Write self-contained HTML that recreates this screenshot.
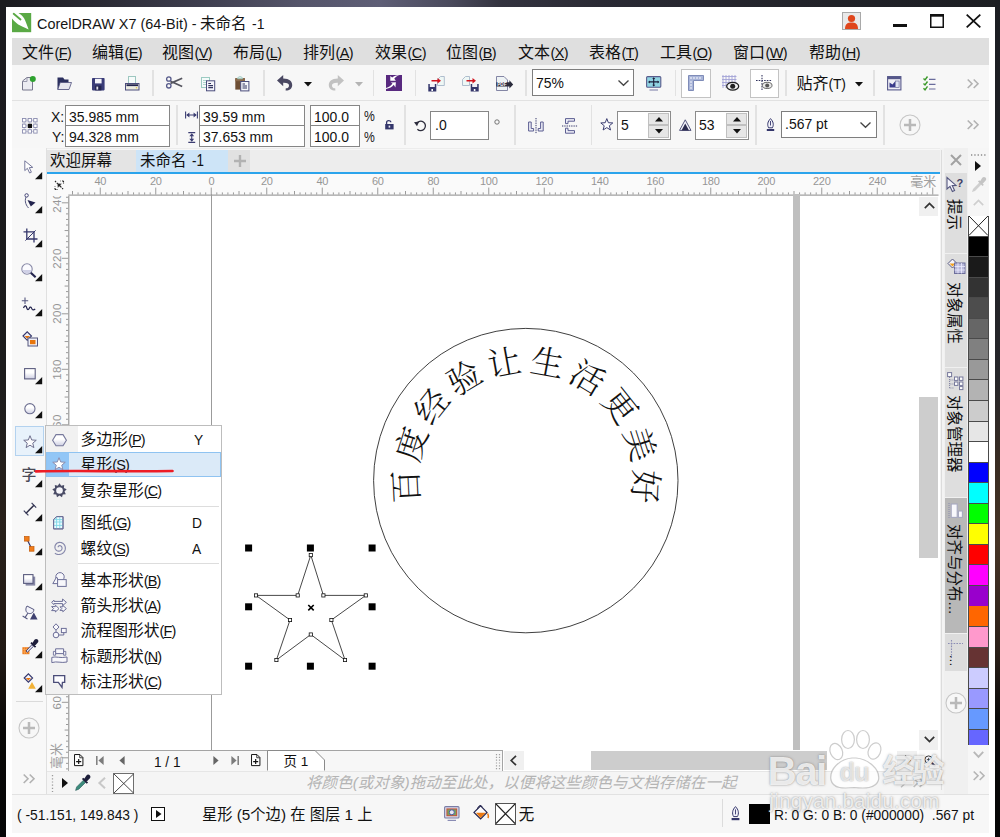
<!DOCTYPE html><html lang="zh"><head><meta charset="utf-8"><title>CorelDRAW X7 (64-Bit) - 未命名 -1</title><style>
html,body{margin:0;padding:0;}
body{width:1000px;height:837px;overflow:hidden;position:relative;background:#1d1d20;font-family:"Liberation Sans","Noto Sans CJK SC",sans-serif;color:#1a1a1a;}
.a{position:absolute;}
.t{position:absolute;white-space:nowrap;line-height:1;}
.u{text-decoration:underline;text-underline-offset:1px;text-decoration-thickness:1px;}
.fld{position:absolute;background:#fff;border:1px solid #868686;box-sizing:border-box;}
.sep{position:absolute;width:1px;background:#d4d4d4;}
svg{position:absolute;overflow:visible;}
</style></head><body>
<div class="a" style="left:0px;top:0px;width:1000px;height:8px;background:linear-gradient(90deg,#1a1a1e 0%,#2a2a34 10%,#3e3e4e 20%,#55556a 30%,#5e5e76 38%,#4a4a5c 45%,#33333f 50%,#2a2a34 60%,#22232a 80%,#1c1e22 100%);"></div>
<div class="a" style="left:0px;top:0px;width:6px;height:837px;background:linear-gradient(180deg,#1b1b1f 0%,#1d1c1d 45%,#2a221c 62%,#221a15 78%,#0a0908 87%,#050505 100%);"></div>
<div class="a" style="left:995px;top:0px;width:5px;height:837px;background:linear-gradient(180deg,#1b1d22 0%,#26262a 45%,#3a2c22 56%,#463426 65%,#2a1f18 78%,#0a0908 86%,#060606 100%);"></div>
<div class="a" style="left:6px;top:7px;width:989.2px;height:830px;background:#ffffff;"></div>
<svg style="left:11.9px;top:12.7px" width="19.2" height="19.2" viewBox="0 0 19.2 19.2"><rect x="0" y="0" width="19.2" height="19.2" fill="#5aa945"/><path d="M0 0 H6.5 C9 1.5 11 3.5 12.2 5.4 C13.5 8 15.5 13 16.6 16.4 C12.5 14.5 8.5 12.8 6.2 11.4 C3.8 9.8 1.5 7.5 0 5.6 Z" fill="#fff"/><path d="M1.7 0.8 L8.5 6.4" stroke="#5aa945" stroke-width="1.9" stroke-linecap="round"/></svg>
<div class="t" style="left:37.3px;top:15.5px;font-size:15.5px;color:#151515;transform-origin:0 0;transform:scaleX(0.929);">CorelDRAW X7 (64-Bit) -</div>
<div class="t" style="left:200px;top:15.6px;font-size:15.5px;color:#151515;">未命名</div>
<div class="t" style="left:252px;top:15.5px;font-size:15.5px;color:#151515;transform-origin:0 0;transform:scaleX(0.900);">-1</div>
<div class="a" style="left:12px;top:37.5px;width:977px;height:27.5px;background:#dfdfdf;"></div>
<div class="t" style="left:22px;top:44.5px;font-size:16px;color:#111;">文件<span style="font-size:14.5px;letter-spacing:-0.6px;margin-left:0.5px">(<span class="u">F</span>)</span></div>
<div class="t" style="left:92px;top:44.5px;font-size:16px;color:#111;">编辑<span style="font-size:14.5px;letter-spacing:-0.6px;margin-left:0.5px">(<span class="u">E</span>)</span></div>
<div class="t" style="left:162px;top:44.5px;font-size:16px;color:#111;">视图<span style="font-size:14.5px;letter-spacing:-0.6px;margin-left:0.5px">(<span class="u">V</span>)</span></div>
<div class="t" style="left:233px;top:44.5px;font-size:16px;color:#111;">布局<span style="font-size:14.5px;letter-spacing:-0.6px;margin-left:0.5px">(<span class="u">L</span>)</span></div>
<div class="t" style="left:303px;top:44.5px;font-size:16px;color:#111;">排列<span style="font-size:14.5px;letter-spacing:-0.6px;margin-left:0.5px">(<span class="u">A</span>)</span></div>
<div class="t" style="left:375px;top:44.5px;font-size:16px;color:#111;">效果<span style="font-size:14.5px;letter-spacing:-0.6px;margin-left:0.5px">(<span class="u">C</span>)</span></div>
<div class="t" style="left:446px;top:44.5px;font-size:16px;color:#111;">位图<span style="font-size:14.5px;letter-spacing:-0.6px;margin-left:0.5px">(<span class="u">B</span>)</span></div>
<div class="t" style="left:518px;top:44.5px;font-size:16px;color:#111;">文本<span style="font-size:14.5px;letter-spacing:-0.6px;margin-left:0.5px">(<span class="u">X</span>)</span></div>
<div class="t" style="left:589px;top:44.5px;font-size:16px;color:#111;">表格<span style="font-size:14.5px;letter-spacing:-0.6px;margin-left:0.5px">(<span class="u">T</span>)</span></div>
<div class="t" style="left:660px;top:44.5px;font-size:16px;color:#111;">工具<span style="font-size:14.5px;letter-spacing:-0.6px;margin-left:0.5px">(<span class="u">O</span>)</span></div>
<div class="t" style="left:733px;top:44.5px;font-size:16px;color:#111;">窗口<span style="font-size:14.5px;letter-spacing:-0.6px;margin-left:0.5px">(<span class="u">W</span>)</span></div>
<div class="t" style="left:809px;top:44.5px;font-size:16px;color:#111;">帮助<span style="font-size:14.5px;letter-spacing:-0.6px;margin-left:0.5px">(<span class="u">H</span>)</span></div>
<div class="a" style="left:12px;top:65px;width:977px;height:35px;background:#f7f7f7;"></div>
<div class="a" style="left:12px;top:100px;width:977px;height:1px;background:#e2e2e2;"></div>
<div class="a" style="left:12px;top:101px;width:977px;height:48.5px;background:#f7f7f7;"></div>
<div class="a" style="left:12px;top:148px;width:977px;height:1px;background:#ececec;"></div>
<div class="a" style="left:47px;top:149.5px;width:893px;height:22.7px;background:#ededed;"></div>
<div class="a" style="left:47px;top:149.5px;width:89px;height:22.7px;background:#e4e4e4;"></div>
<div class="a" style="left:136px;top:149.5px;width:92px;height:22.7px;background:#cde4f7;"></div>
<div class="a" style="left:228px;top:149.5px;width:22px;height:22.7px;background:#e1e1e1;"></div>
<div class="t" style="left:50px;top:153px;font-size:15.5px;color:#111;">欢迎屏幕</div>
<div class="t" style="left:140px;top:153px;font-size:15.5px;color:#111;">未命名</div>
<div class="t" style="left:191.5px;top:152.8px;font-size:15.6px;color:#111;transform-origin:0 0;transform:scaleX(0.860);">-1</div>
<div class="a" style="left:47px;top:172px;width:893px;height:1.5px;background:#2ba4ec;"></div>
<div class="a" style="left:12px;top:148px;width:34px;height:646.5px;background:#f8f8f8;"></div>
<div class="a" style="left:46px;top:148px;width:1px;height:646px;background:#e0e0e0;"></div>
<div class="a" style="left:47px;top:174px;width:893px;height:22px;background:#fafafa;"></div>
<div class="a" style="left:47px;top:194px;width:22.5px;height:577px;background:#fafafa;"></div>
<div class="a" style="left:69.5px;top:195.7px;width:849.5px;height:554.3px;background:#ffffff;"></div>
<svg style="left:842px;top:12px" width="19" height="18" viewBox="0 0 19 18"><rect x="0.5" y="0.5" width="18" height="17" fill="#e9e9e9" stroke="#a9a9a9"/><circle cx="9.5" cy="6.5" r="3.6" fill="#e0461c"/><path d="M3 17 C3 11.5 6 10.5 9.5 10.5 C13 10.5 16 11.5 16 17 Z" fill="#e0461c"/></svg>
<div class="a" style="left:892.5px;top:24px;width:14px;height:3px;background:#111;"></div>
<svg style="left:930px;top:14px" width="14" height="14" viewBox="0 0 14 14"><rect x="0.75" y="1.5" width="12.5" height="11.75" fill="none" stroke="#111" stroke-width="1.5"/><rect x="0" y="0" width="14" height="2.6" fill="#111"/></svg>
<svg style="left:966px;top:14px" width="15" height="14" viewBox="0 0 15 14"><path d="M0.7 0.7 L14.3 13.3 M14.3 0.7 L0.7 13.3" stroke="#111" stroke-width="1.8" fill="none"/></svg>
<svg style="left:22px;top:75px" width="14" height="16" viewBox="0 0 14 16"><path d="M0.5 15 V6 L5 2.5 H10.5 V15 Z" fill="#ececf2" stroke="#77778c"/><path d="M0.5 6.5 H5 V2.5" fill="none" stroke="#9a9aae"/><circle cx="10.8" cy="4" r="3" fill="#2fa22f"/></svg>
<svg style="left:56.5px;top:77px" width="15" height="13" viewBox="0 0 15 13"><path d="M0.5 12.5 V0.5 H6 L7.5 2.5 H11.5 V12.5 Z" fill="#2b2f5e"/><path d="M0.8 12.5 L3.2 5.5 H14.5 L12 12.5 Z" fill="#e6e6ef" stroke="#50527e" stroke-width="0.8"/></svg>
<svg style="left:91.5px;top:78px" width="13" height="12.5" viewBox="0 0 13 12.5"><rect x="0" y="0" width="12.6" height="12.4" rx="0.8" fill="#3a3c78"/><rect x="3" y="0.8" width="6.6" height="4.6" fill="#f4f4fa"/><rect x="3.2" y="7.6" width="6.2" height="4.8" fill="#23244e"/><rect x="4.4" y="8.6" width="1.8" height="3" fill="#e0e0ea"/></svg>
<svg style="left:125px;top:76px" width="14.5" height="14.5" viewBox="0 0 14.5 14.5"><rect x="3.5" y="0.5" width="7" height="8" fill="#f6fbfa" stroke="#9dc7c0"/><rect x="0.5" y="7.5" width="13.5" height="6.5" fill="#ecece2" stroke="#4c4e7c"/><rect x="1.5" y="8.3" width="11.5" height="1.8" fill="#23244e"/><rect x="10.8" y="11.3" width="1.4" height="1" fill="#e8c020"/></svg>
<div class="a" style="left:152px;top:70px;width:1.5px;height:26px;background:#e2e2e2;"></div>
<svg style="left:165.5px;top:76px" width="17" height="13" viewBox="0 0 17 13"><path d="M4.5 5.2 L16.2 10.6 M4.5 7.4 L16.2 2.2" stroke="#55555f" stroke-width="1.7" fill="none"/><circle cx="2.8" cy="3" r="2.2" fill="none" stroke="#565a8a" stroke-width="1.3"/><circle cx="2.8" cy="9.8" r="2.2" fill="none" stroke="#565a8a" stroke-width="1.3"/></svg>
<svg style="left:201px;top:77px" width="14.5" height="14.5" viewBox="0 0 14.5 14.5"><rect x="0.5" y="0.5" width="8" height="10" fill="#f4fbfa" stroke="#9ccbc2"/><path d="M2 3.5 H6 M2 5.5 H6 M2 7.5 H6" stroke="#9ccbc2" stroke-width="0.8"/><rect x="5.5" y="3.8" width="8.2" height="10" fill="#f5f5fa" stroke="#4c4e7c"/><path d="M7.3 6.5 H10 M7.3 8.6 H12 M7.3 10.6 H12" stroke="#33355f" stroke-width="1.1"/></svg>
<svg style="left:235px;top:76px" width="14.5" height="15.5" viewBox="0 0 14.5 15.5"><rect x="0.3" y="2.2" width="9.6" height="11.4" fill="#6e4f35"/><rect x="0.3" y="2.2" width="9.6" height="3" fill="#8a6a4c"/><path d="M2.5 2.8 C2.5 0 7.6 0 7.6 2.8 Z" fill="#dff2ee" stroke="#8fbfb6" stroke-width="0.8"/><rect x="5.7" y="5.5" width="8.2" height="9.4" fill="#f5f5fa" stroke="#4c4e7c"/><path d="M7.5 8 H10 M7.5 10 H12 M7.5 12 H12" stroke="#33355f" stroke-width="1.1"/></svg>
<div class="a" style="left:263px;top:70px;width:1.5px;height:26px;background:#e2e2e2;"></div>
<svg style="left:277px;top:75px" width="16" height="16" viewBox="0 0 16 16"><g><path d="M0 5.6 L6.2 0 V3.4 C12.5 3.4 15.4 6.4 15.2 10.4 C15 13.6 12.2 15.8 8.6 15.6 L8.8 13.3 C11 13.3 12 12 12 10.4 C12 8.6 10.4 7.6 6.2 7.7 V11.2 Z" fill="#4a4862"/></g></svg>
<svg style="left:303.5px;top:82px" width="8" height="4.5" viewBox="0 0 8 4.5"><path d="M0 0 H8 L4 4.5 Z" fill="#111"/></svg>
<svg style="left:327.5px;top:75px" width="16" height="16" viewBox="0 0 16 16"><g transform="translate(16,0) scale(-1,1)"><path d="M0 5.6 L6.2 0 V3.4 C12.5 3.4 15.4 6.4 15.2 10.4 C15 13.6 12.2 15.8 8.6 15.6 L8.8 13.3 C11 13.3 12 12 12 10.4 C12 8.6 10.4 7.6 6.2 7.7 V11.2 Z" fill="#c2c2c2"/></g></svg>
<svg style="left:354.5px;top:82px" width="8" height="4.5" viewBox="0 0 8 4.5"><path d="M0 0 H8 L4 4.5 Z" fill="#b4b4b4"/></svg>
<div class="a" style="left:372.5px;top:70px;width:1.5px;height:26px;background:#e2e2e2;"></div>
<svg style="left:386px;top:75px" width="16" height="16" viewBox="0 0 16 16"><rect width="16" height="16" fill="#58297f"/><path d="M13.6 0 C10.6 0.9 9.2 2.4 8.3 3.8 L9.9 5.8 H4.3 V0.9 L6.2 2.6 C8 1 10.4 0.1 13.6 0 Z" fill="#fff"/><path d="M0 14 C3.6 13.4 6.2 11.8 7.8 9.8 L9.4 12.6 L9.9 7.2 L4.8 7.5 L6.5 8.6 C5 10.6 3 12.2 0 13 Z" fill="#fff"/></svg>
<div class="a" style="left:414.5px;top:70px;width:1.5px;height:26px;background:#e2e2e2;"></div>
<svg style="left:427.5px;top:76px" width="17" height="15.5" viewBox="0 0 17 15.5"><path d="M9.5 3.5 L12.5 0.5 H16.3 V9.5 H9.5 Z" fill="#eef7f5" stroke="#a7b7c9" stroke-width="0.9"/><rect x="0.3" y="8" width="8" height="7.5" fill="#34366b"/><rect x="1.8" y="8" width="5" height="3" fill="#f0f0f6"/><rect x="3.4" y="13" width="1.6" height="2" fill="#fff"/><path d="M3.5 4 H9.5 V2 L13 4.8 L9.5 7.6 V5.6 H3.5 Z" fill="#d2141e"/></svg>
<svg style="left:461.5px;top:76px" width="17" height="15.5" viewBox="0 0 17 15.5"><path d="M0.5 3.5 L3.5 0.5 H7.5 V9.5 H0.5 Z" fill="#eef7f5" stroke="#a7b7c9" stroke-width="0.9"/><rect x="8.7" y="8" width="8" height="7.5" fill="#34366b"/><rect x="10.2" y="8" width="5" height="3" fill="#f0f0f6"/><rect x="11.8" y="13" width="1.6" height="2" fill="#fff"/><path d="M4.5 4 H10.5 V2 L14 4.8 L10.5 7.6 V5.6 H4.5 Z" fill="#d2141e"/></svg>
<svg style="left:496px;top:76px" width="17.5" height="15.5" viewBox="0 0 17.5 15.5"><path d="M0.5 0.5 H8 L11.5 4 V14.5 H0.5 Z" fill="#eef3f5" stroke="#77799c" stroke-width="0.9"/><path d="M0.3 6.2 H13.4 V4.3 L17.2 8.4 L13.4 12.4 V10.6 H0.3 Z" fill="#2a2b3c"/><text x="1.3" y="10.1" font-size="4.6" font-weight="700" fill="#fff" font-family="Liberation Sans,sans-serif">PDF</text></svg>
<div class="a" style="left:525px;top:70px;width:1.5px;height:26px;background:#e2e2e2;"></div>
<div class="fld" style="left:532px;top:68.5px;width:102px;height:27px;border-color:#7e7e7e"></div>
<div class="t" style="left:535.5px;top:75.1px;font-size:15px;color:#111;transform-origin:0 0;transform:scaleX(0.930);">75%</div>
<svg style="left:617.5px;top:79.5px" width="11" height="6" viewBox="0 0 11 6"><path d="M0.5 0.5 L5.5 5.3 L10.5 0.5" fill="none" stroke="#444" stroke-width="1.3"/></svg>
<svg style="left:645.5px;top:76px" width="15.5" height="15" viewBox="0 0 15.5 15"><rect x="0.6" y="0.6" width="14.2" height="10.6" rx="1" fill="#8fd3e2" stroke="#5a5c8c" stroke-width="1.1"/><path d="M7.7 2 V9.8 M3 5.9 H12.4" stroke="#1d1e3a" stroke-width="1.1"/><path d="M7.7 1.2 L9.2 3 H6.2 Z M7.7 10.6 L9.2 8.8 H6.2 Z M2 5.9 L3.8 4.4 V7.4 Z M13.4 5.9 L11.6 4.4 V7.4 Z" fill="#1d1e3a"/><path d="M3.5 14 H12" stroke="#8b8db2" stroke-width="1.2"/></svg>
<div class="a" style="left:674.5px;top:70px;width:1.5px;height:26px;background:#e2e2e2;"></div>
<div class="a" style="left:681px;top:68.5px;width:29.5px;height:29px;box-sizing:border-box;background:#fff;border:1px solid #c3c3c3"></div>
<svg style="left:688px;top:75px" width="16" height="16" viewBox="0 0 16 16"><path d="M0.5 0.5 H15.5 V5.5 H5.5 V15.5 H0.5 Z" fill="#a8b4d8" stroke="#7f8cb8"/><path d="M3 2 V4 M6 2 V4 M9 2 V4 M12 2 V4 M2 7 H4 M2 10 H4 M2 13 H4" stroke="#f4f6fc" stroke-width="1.1"/></svg>
<svg style="left:722px;top:75px" width="17" height="16" viewBox="0 0 17 16"><path d="M1 0 V13 M4 0 V13 M7 0 V13 M10 0 V13 M13 0 V13 M0 1.5 H14.5 M0 4.5 H14.5 M0 7.5 H14.5 M0 10.5 H14.5" stroke="#a3a3d6" stroke-width="0.9"/><ellipse cx="10.7" cy="11.2" rx="6" ry="3.9" fill="#f2f2f2" stroke="#222" stroke-width="1.3"/><circle cx="10.7" cy="11.2" r="2.5" fill="#222"/></svg>
<div class="a" style="left:750px;top:68.5px;width:29px;height:29px;box-sizing:border-box;background:#fff;border:1px solid #c3c3c3"></div>
<svg style="left:756px;top:75px" width="17" height="16" viewBox="0 0 17 16"><path d="M6 0 V16 M0 5.5 H16" stroke="#33355f" stroke-width="1.1" stroke-dasharray="1.6 1.1"/><ellipse cx="11.2" cy="10.4" rx="4.8" ry="3.1" fill="#e8e8e8" stroke="#666" stroke-width="1"/><circle cx="11.2" cy="10.4" r="2" fill="#555"/></svg>
<div class="a" style="left:785px;top:70px;width:1.5px;height:26px;background:#e2e2e2;"></div>
<div class="t" style="left:796.5px;top:75.5px;font-size:16px;color:#111;">贴齐<span style="font-size:14px;letter-spacing:-0.3px">(T)</span></div>
<svg style="left:855px;top:82px" width="8" height="4.5" viewBox="0 0 8 4.5"><path d="M0 0 H8 L4 4.5 Z" fill="#111"/></svg>
<div class="a" style="left:873px;top:70px;width:1.5px;height:26px;background:#e2e2e2;"></div>
<svg style="left:887px;top:76px" width="14.5" height="14.5" viewBox="0 0 14.5 14.5"><rect x="0.6" y="0.6" width="13.3" height="13.3" fill="#f0f0f6" stroke="#56588a" stroke-width="1.1"/><rect x="0.6" y="0.6" width="13.3" height="2.6" fill="#56588a"/><path d="M2.5 11.5 V6.5 L5.5 8.5 L8 5.5 V11.5 Z" fill="#3a3c8c"/><rect x="8.5" y="5" width="3.6" height="6.5" fill="#dfe3f2" stroke="#6a6c9c" stroke-width="0.7"/></svg>
<svg style="left:922.5px;top:76px" width="13" height="14.5" viewBox="0 0 13 14.5"><path d="M0.5 2.5 L2 4 L4.5 0.5 M0.5 7.5 L2 9 L4.5 5.5 M0.5 12.3 L2 13.8 L4.5 10.3" fill="none" stroke="#3c9a2a" stroke-width="1.4"/><path d="M6 3.3 H12.5 M6 8.3 H12.5 M6 13 H12.5" stroke="#6a6c9c" stroke-width="1.2"/></svg>
<svg style="left:967px;top:78.5px" width="12" height="9.5" viewBox="0 0 12 9.5"><path d="M0.7 0.5 L5 4.75 L0.7 9 M6.7 0.5 L11 4.75 L6.7 9" fill="none" stroke="#b2b2b2" stroke-width="1.6"/></svg>
<svg style="left:21.5px;top:117.5px" width="16" height="16" viewBox="0 0 16 16"><path d="M2.2 2.2 H13.4 V13.4 H2.2 Z M2.2 7.8 H13.4 M7.8 2.2 V13.4" stroke="#b9bad0" stroke-width="0.8" fill="none"/><rect x="0.5" y="0.5" width="3.4" height="3.4" fill="#fff" stroke="#8b8db0" stroke-width="0.9"/><rect x="6.1" y="0.5" width="3.4" height="3.4" fill="#fff" stroke="#8b8db0" stroke-width="0.9"/><rect x="11.7" y="0.5" width="3.4" height="3.4" fill="#fff" stroke="#8b8db0" stroke-width="0.9"/><rect x="0.5" y="6.1" width="3.4" height="3.4" fill="#fff" stroke="#8b8db0" stroke-width="0.9"/><rect x="5.8" y="5.8" width="4.2" height="4.2" fill="#111"/><rect x="11.7" y="6.1" width="3.4" height="3.4" fill="#fff" stroke="#8b8db0" stroke-width="0.9"/><rect x="0.5" y="11.7" width="3.4" height="3.4" fill="#fff" stroke="#8b8db0" stroke-width="0.9"/><rect x="6.1" y="11.7" width="3.4" height="3.4" fill="#fff" stroke="#8b8db0" stroke-width="0.9"/><rect x="11.7" y="11.7" width="3.4" height="3.4" fill="#fff" stroke="#8b8db0" stroke-width="0.9"/></svg>
<div class="t" style="left:50.5px;top:108.6px;font-size:15px;color:#111;transform-origin:0 0;transform:scaleX(0.930);">X:</div>
<div class="t" style="left:51.5px;top:129.1px;font-size:15px;color:#111;transform-origin:0 0;transform:scaleX(0.930);">Y:</div>
<div class="fld" style="left:65px;top:105px;width:105px;height:21px"><div class="t" style="left:2.6px;top:2.6px;font-size:15px;color:#111;transform-origin:0 0;transform:scaleX(0.93)">35.985 mm</div></div>
<div class="fld" style="left:65px;top:125px;width:105px;height:22px"><div class="t" style="left:2.6px;top:3.1px;font-size:15px;color:#111;transform-origin:0 0;transform:scaleX(0.93)">94.328 mm</div></div>
<div class="a" style="left:176px;top:105px;width:1.5px;height:40px;background:#e2e2e2;"></div>
<svg style="left:184.5px;top:111px" width="13" height="8" viewBox="0 0 13 8"><path d="M0.6 0.5 V7.5 M12.4 0.5 V7.5 M2 4 H11" stroke="#3c3e72" stroke-width="1.1" fill="none"/><path d="M1.2 4 L4.4 1.6 V6.4 Z M11.8 4 L8.6 1.6 V6.4 Z" fill="#3c3e72"/></svg>
<svg style="left:188px;top:131.5px" width="7.5" height="11" viewBox="0 0 7.5 11"><path d="M0.3 0.6 H7.2 M0.3 10.4 H7.2 M3.75 2 V9" stroke="#3c3e72" stroke-width="1.1" fill="none"/><path d="M3.75 1.2 L6.2 4.2 H1.3 Z M3.75 9.8 L6.2 6.8 H1.3 Z" fill="#3c3e72"/></svg>
<div class="fld" style="left:199px;top:105px;width:106px;height:21px"><div class="t" style="left:2.6px;top:2.6px;font-size:15px;color:#111;transform-origin:0 0;transform:scaleX(0.93)">39.59 mm</div></div>
<div class="fld" style="left:199px;top:125px;width:106px;height:22px"><div class="t" style="left:2.6px;top:3.1px;font-size:15px;color:#111;transform-origin:0 0;transform:scaleX(0.93)">37.653 mm</div></div>
<div class="fld" style="left:310px;top:105px;width:50px;height:21px"><div class="t" style="left:2.6px;top:2.6px;font-size:15px;color:#111;transform-origin:0 0;transform:scaleX(0.93)">100.0</div></div>
<div class="fld" style="left:310px;top:125px;width:50px;height:22px"><div class="t" style="left:2.6px;top:3.1px;font-size:15px;color:#111;transform-origin:0 0;transform:scaleX(0.93)">100.0</div></div>
<div class="t" style="left:363.5px;top:108.8px;font-size:14.5px;color:#222;transform-origin:0 0;transform:scaleX(0.840);">%</div>
<div class="t" style="left:363.5px;top:129.5px;font-size:14.5px;color:#222;transform-origin:0 0;transform:scaleX(0.840);">%</div>
<svg style="left:384.5px;top:119.5px" width="9" height="9.5" viewBox="0 0 9 9.5"><path d="M1.6 4.2 V2.6 C1.6 0 5.8 0 5.8 2.2" fill="none" stroke="#34366b" stroke-width="1.3"/><rect x="0.2" y="4" width="8.4" height="5.4" fill="#34366b"/><rect x="3.6" y="5.6" width="1.6" height="2" fill="#e8e8f4"/></svg>
<div class="a" style="left:404px;top:105px;width:1.5px;height:40px;background:#e2e2e2;"></div>
<svg style="left:413.5px;top:118.5px" width="12.5" height="12" viewBox="0 0 12.5 12"><path d="M2.6 4.6 A4.7 4.7 0 1 1 3.4 10.2" fill="none" stroke="#2c2c3c" stroke-width="1.3"/><path d="M0 3.2 L5.2 2.6 L3 7.2 Z" fill="#2c2c3c"/></svg>
<div class="fld" style="left:430px;top:110.5px;width:58.5px;height:29px"><div class="t" style="left:3.5px;top:5.8px;font-size:15px;color:#111;transform-origin:0 0;transform:scaleX(0.93)">.0</div></div>
<svg style="left:494px;top:119px" width="6" height="6" viewBox="0 0 6 6"><circle cx="3" cy="3" r="2.2" fill="none" stroke="#666" stroke-width="0.9"/></svg>
<div class="a" style="left:514px;top:105px;width:1.5px;height:40px;background:#e2e2e2;"></div>
<svg style="left:527.5px;top:117.5px" width="16" height="15.5" viewBox="0 0 16 15.5"><path d="M8 0 V15.5" stroke="#34366b" stroke-width="1" stroke-dasharray="1.3 1"/><path d="M0.6 4 H3.2 V10.5 H5.6 V13 H0.6 Z" fill="#ecedf6" stroke="#5d5f92" stroke-width="1"/><path d="M15.2 4 H12.6 V10.5 H10.2 V13 H15.2 Z" fill="#ecedf6" stroke="#5d5f92" stroke-width="1"/></svg>
<svg style="left:562px;top:117.5px" width="15.5" height="16" viewBox="0 0 15.5 16"><path d="M0 8 H15.5" stroke="#34366b" stroke-width="1" stroke-dasharray="1.3 1"/><path d="M12.5 0.6 V3.2 H6 V5.6 H3.5 V0.6 Z" fill="#ecedf6" stroke="#5d5f92" stroke-width="1"/><path d="M12.5 15.2 V12.6 H6 V10.2 H3.5 V15.2 Z" fill="#ecedf6" stroke="#5d5f92" stroke-width="1"/></svg>
<div class="a" style="left:590.5px;top:105px;width:1.5px;height:40px;background:#e2e2e2;"></div>
<svg style="left:599.5px;top:118px" width="14" height="13" viewBox="0 0 14 13"><polygon points="6.80,0.60 8.39,4.72 12.79,4.95 9.37,7.73 10.50,12.00 6.80,9.60 3.10,12.00 4.23,7.73 0.81,4.95 5.21,4.72" fill="#fdfdff" stroke="#3c3e72" stroke-width="1"/></svg>
<div class="fld" style="left:617px;top:110.5px;width:54px;height:29px;border-color:#8c8c8c"><div class="t" style="left:2.6px;top:5.8px;font-size:15px;color:#111;transform-origin:0 0;transform:scaleX(0.93)">5</div><div class="a" style="right:1px;top:1px;width:21px;height:12.5px;box-sizing:border-box;background:#e6e6e6;border:1px solid #c0c0c0"></div><div class="a" style="right:1px;bottom:1px;width:21px;height:12.5px;box-sizing:border-box;background:#e6e6e6;border:1px solid #c0c0c0"></div><svg style="right:7.5px;top:5px" width="8" height="4.5"><path d="M0 4.5 H8 L4 0 Z" fill="#111"/></svg><svg style="right:7.5px;bottom:5px" width="8" height="4.5"><path d="M0 0 H8 L4 4.5 Z" fill="#111"/></svg></div>
<svg style="left:679px;top:118.5px" width="12.5" height="12" viewBox="0 0 12.5 12"><path d="M6.25 0.8 L12 11.4 H0.5 Z" fill="#f4f4fb" stroke="#55577f" stroke-width="1"/><path d="M6.25 4.6 L10 11.4 H2.5 Z" fill="#2a2b4e"/></svg>
<div class="fld" style="left:695px;top:110.5px;width:54px;height:29px;border-color:#8c8c8c"><div class="t" style="left:2.6px;top:5.8px;font-size:15px;color:#111;transform-origin:0 0;transform:scaleX(0.93)">53</div><div class="a" style="right:1px;top:1px;width:21px;height:12.5px;box-sizing:border-box;background:#e6e6e6;border:1px solid #c0c0c0"></div><div class="a" style="right:1px;bottom:1px;width:21px;height:12.5px;box-sizing:border-box;background:#e6e6e6;border:1px solid #c0c0c0"></div><svg style="right:7.5px;top:5px" width="8" height="4.5"><path d="M0 4.5 H8 L4 0 Z" fill="#111"/></svg><svg style="right:7.5px;bottom:5px" width="8" height="4.5"><path d="M0 0 H8 L4 4.5 Z" fill="#111"/></svg></div>
<div class="a" style="left:755px;top:105px;width:1.5px;height:40px;background:#e2e2e2;"></div>
<svg style="left:766px;top:117.5px" width="9" height="13.5" viewBox="0 0 9 13.5"><path d="M4.5 0.6 C7.4 3.6 8 6.8 6.4 9.8 H2.6 C1 6.8 1.6 3.6 4.5 0.6 Z" fill="#f2f2fa" stroke="#34366b" stroke-width="1"/><path d="M4.5 3 V7.5" stroke="#34366b" stroke-width="0.9"/><rect x="0.8" y="11" width="7.4" height="2" fill="#34366b"/></svg>
<div class="fld" style="left:781px;top:110.5px;width:95.5px;height:27px;border-color:#7e7e7e"></div>
<div class="t" style="left:784.5px;top:116.3px;font-size:15px;color:#111;transform-origin:0 0;transform:scaleX(0.930);">.567 pt</div>
<svg style="left:860px;top:121.5px" width="11" height="6" viewBox="0 0 11 6"><path d="M0.5 0.5 L5.5 5.3 L10.5 0.5" fill="none" stroke="#444" stroke-width="1.3"/></svg>
<div class="a" style="left:883px;top:105px;width:1.5px;height:40px;background:#e2e2e2;"></div>
<svg style="left:899px;top:113.5px" width="22" height="22" viewBox="0 0 22 22"><circle cx="11" cy="11" r="10" fill="#f7f7f7" stroke="#c6c6c6" stroke-width="1.1"/><path d="M11 5 V17 M5 11 H17" stroke="#b9b9b9" stroke-width="2.5"/></svg>
<svg style="left:967px;top:120px" width="12" height="9.5" viewBox="0 0 12 9.5"><path d="M0.7 0.5 L5 4.75 L0.7 9 M6.7 0.5 L11 4.75 L6.7 9" fill="none" stroke="#b2b2b2" stroke-width="1.6"/></svg>
<svg style="left:233.5px;top:154.8px" width="12" height="12" viewBox="0 0 12 12"><path d="M6 0 V12 M0 6 H12" stroke="#b2b2b2" stroke-width="2.4"/></svg>
<div class="a" style="left:15px;top:426px;width:29px;height:30px;box-sizing:border-box;background:#e8f2fb;border:1px solid #b3d2ef"></div>
<svg style="left:24px;top:160px" width="11" height="14" viewBox="0 0 11 14"><path d="M0.8 0.8 L0.8 10.6 L3.4 8.3 L5.6 13 L7.4 12.2 L5.3 7.6 L8.8 7.4 Z" fill="#fff" stroke="#77799c" stroke-width="1"/></svg>
<svg style="left:35.2px;top:171.7px" width="7.2" height="7.2" viewBox="0 0 7.2 7.2"><path d="M7.2 0 V7.2 H0 Z" fill="#111"/></svg>
<svg style="left:21.5px;top:193px" width="15" height="16" viewBox="0 0 15 16"><path d="M4.5 2.8 C2.5 7 3 11 6.5 15" fill="none" stroke="#55577f" stroke-width="1"/><circle cx="4.6" cy="2.4" r="1.7" fill="#fff" stroke="#34366b" stroke-width="0.9"/><path d="M5.5 7 L13.5 9.5 L8.8 13.6 Z" fill="#23244e"/></svg>
<svg style="left:35.2px;top:205.95px" width="7.2" height="7.2" viewBox="0 0 7.2 7.2"><path d="M7.2 0 V7.2 H0 Z" fill="#111"/></svg>
<svg style="left:22.5px;top:228px" width="15" height="15" viewBox="0 0 15 15"><path d="M3.8 0.5 V11 H14.5 M0.5 3.8 H11 V14.5" fill="none" stroke="#34366b" stroke-width="1.3"/><path d="M2.4 12.6 L12.6 2.4" stroke="#34366b" stroke-width="1"/></svg>
<svg style="left:35.2px;top:240.2px" width="7.2" height="7.2" viewBox="0 0 7.2 7.2"><path d="M7.2 0 V7.2 H0 Z" fill="#111"/></svg>
<svg style="left:21px;top:263px" width="15.5" height="15" viewBox="0 0 15.5 15"><circle cx="6" cy="6" r="5.2" fill="#fbfbff" stroke="#8788a6" stroke-width="1.1"/><path d="M1.4 7 A4.8 4.8 0 0 0 10.6 7 Z" fill="#cfd0e6"/><path d="M9.8 9.8 L14.6 14.2" stroke="#23244e" stroke-width="2.2"/></svg>
<svg style="left:35.2px;top:274.45px" width="7.2" height="7.2" viewBox="0 0 7.2 7.2"><path d="M7.2 0 V7.2 H0 Z" fill="#111"/></svg>
<svg style="left:21px;top:296.5px" width="15" height="16" viewBox="0 0 15 16"><path d="M4 0.5 V7 M0.8 3.7 H7.2" stroke="#55577f" stroke-width="1.1"/><path d="M2.5 11 C4 7.5 5.3 9 5.8 11 C6.3 13.2 7.6 13 8.3 11.2 C9 9.6 10.2 10 10.8 11.6 C11.4 13.2 12.6 13.4 14.2 12" fill="none" stroke="#23244e" stroke-width="1.2"/></svg>
<svg style="left:35.2px;top:308.7px" width="7.2" height="7.2" viewBox="0 0 7.2 7.2"><path d="M7.2 0 V7.2 H0 Z" fill="#111"/></svg>
<svg style="left:21.5px;top:330.5px" width="16" height="16" viewBox="0 0 16 16"><path d="M1 5 L5.2 0.8 L9.5 5 L5.2 9.3 Z" fill="#f0f0f6" stroke="#34366b" stroke-width="1.1"/><path d="M2.6 5 H8 L5.2 7.8 Z" fill="#e8760c"/><rect x="6" y="7" width="9.5" height="8" fill="#f0f0f6" stroke="#55577f" stroke-width="1"/><rect x="8" y="9" width="5.5" height="4.2" fill="#e8760c"/></svg>
<svg style="left:23.5px;top:367.5px" width="12" height="12"><defs><linearGradient id="g1" x1="0" y1="0" x2="0" y2="1"><stop offset="0" stop-color="#fff"/><stop offset="0.4" stop-color="#fff"/><stop offset="1" stop-color="#cdcee2"/></linearGradient></defs><rect x="0.6" y="0.6" width="10.6" height="10.3" fill="url(#g1)" stroke="#5c5e80" stroke-width="1.1"/></svg>
<svg style="left:35.2px;top:377.2px" width="7.2" height="7.2" viewBox="0 0 7.2 7.2"><path d="M7.2 0 V7.2 H0 Z" fill="#111"/></svg>
<svg style="left:23.5px;top:402.5px" width="12" height="11.5" viewBox="0 0 12 11.5"><circle cx="5.9" cy="5.7" r="5.1" fill="url(#g1)" stroke="#6c6e90" stroke-width="1.1"/></svg>
<svg style="left:35.2px;top:411.45px" width="7.2" height="7.2" viewBox="0 0 7.2 7.2"><path d="M7.2 0 V7.2 H0 Z" fill="#111"/></svg>
<svg style="left:22.5px;top:434.5px" width="14" height="14" viewBox="0 0 14 14"><polygon points="7.00,0.70 8.70,4.95 13.28,5.26 9.76,8.20 10.88,12.64 7.00,10.20 3.12,12.64 4.24,8.20 0.72,5.26 5.30,4.95" fill="#fbfbfd" stroke="#6f7190" stroke-width="1"/></svg>
<svg style="left:35.2px;top:445.7px" width="7.2" height="7.2" viewBox="0 0 7.2 7.2"><path d="M7.2 0 V7.2 H0 Z" fill="#111"/></svg>
<div class="t" style="left:21.5px;top:466.8px;font-size:15px;color:#4a4a56;font-weight:500">字</div>
<svg style="left:35.2px;top:480.45px" width="7.2" height="7.2" viewBox="0 0 7.2 7.2"><path d="M7.2 0 V7.2 H0 Z" fill="#111"/></svg>
<svg style="left:22.5px;top:502px" width="14" height="14.5" viewBox="0 0 14 14.5"><path d="M2.8 11.6 L11.2 2.9" stroke="#2e2f48" stroke-width="1.5"/><path d="M0.8 8.6 L5.4 13.4 M8.6 0.9 L13.2 5.7" stroke="#3a3c5c" stroke-width="1.2"/></svg>
<svg style="left:35.2px;top:514.2px" width="7.2" height="7.2" viewBox="0 0 7.2 7.2"><path d="M7.2 0 V7.2 H0 Z" fill="#111"/></svg>
<svg style="left:24px;top:535.5px" width="11" height="16" viewBox="0 0 11 16"><path d="M2.8 2.8 L7.8 13" stroke="#34366b" stroke-width="1.2"/><rect x="0.5" y="0.5" width="4.6" height="4.6" fill="#f07d1c" stroke="#c25a08" stroke-width="0.7"/><rect x="5.4" y="10.6" width="4.6" height="4.6" fill="#f07d1c" stroke="#c25a08" stroke-width="0.7"/></svg>
<svg style="left:35.2px;top:548.45px" width="7.2" height="7.2" viewBox="0 0 7.2 7.2"><path d="M7.2 0 V7.2 H0 Z" fill="#111"/></svg>
<svg style="left:22.5px;top:573.5px" width="13" height="12" viewBox="0 0 13 12"><rect x="2.6" y="2.6" width="9.6" height="9" fill="#8788a6"/><rect x="0.6" y="0.6" width="9.4" height="8.8" fill="url(#g1)" stroke="#5c5e80" stroke-width="1.1"/></svg>
<svg style="left:35.2px;top:582.7px" width="7.2" height="7.2" viewBox="0 0 7.2 7.2"><path d="M7.2 0 V7.2 H0 Z" fill="#111"/></svg>
<svg style="left:21.5px;top:605px" width="16" height="15" viewBox="0 0 16 15"><path d="M5 1 L12 4.6 C11.4 8 8.5 9.5 5.6 8 C3.4 6.6 3.4 3.4 5 1 Z" fill="#f4f4fb" stroke="#55577f" stroke-width="1"/><path d="M5.8 8.2 L3 12.6 M0.6 11 L5.5 14" stroke="#55577f" stroke-width="1.1"/><path d="M11.8 7.6 L15.6 14.6 H8 Z" fill="#3f4170"/></svg>
<svg style="left:21.5px;top:638.5px" width="16" height="16" viewBox="0 0 16 16"><rect x="0.4" y="8.2" width="7" height="7" fill="#f07d1c"/><path d="M2.4 8.2 V15.2 M4.8 8.2 V15.2 M0.4 10.6 H7.4 M0.4 13 H7.4" stroke="#f9b26a" stroke-width="0.6"/><path d="M4 12 L10 5.6 L11.6 7.2 L5.4 13.2 Z" fill="#e8e8f2" stroke="#34366b" stroke-width="0.9"/><path d="M9 3.6 L13.6 8.2 M10.6 5.4 L13.2 1.4 C14.4 0 16.4 1.8 15 3.2 L11.8 6.6" stroke="#1d1e3a" stroke-width="1.8" fill="#1d1e3a"/></svg>
<svg style="left:35.2px;top:651.2px" width="7.2" height="7.2" viewBox="0 0 7.2 7.2"><path d="M7.2 0 V7.2 H0 Z" fill="#111"/></svg>
<svg style="left:23px;top:673px" width="14" height="16.5" viewBox="0 0 14 16.5"><path d="M1.2 5 L5.4 0.8 L9.6 5 L5.4 9.2 Z" fill="#f4f4fb" stroke="#34366b" stroke-width="1.1"/><path d="M2.8 5 H8 L5.4 7.6 Z" fill="#e8760c"/><path d="M9 9 L12.8 15.8 H5.2 Z" fill="#f2b236"/></svg>
<svg style="left:35.2px;top:685.45px" width="7.2" height="7.2" viewBox="0 0 7.2 7.2"><path d="M7.2 0 V7.2 H0 Z" fill="#111"/></svg>
<div class="a" style="left:15.5px;top:701px;width:27.5px;height:1px;background:#dadada;"></div>
<svg style="left:18px;top:717px" width="22" height="22" viewBox="0 0 22 22"><circle cx="11" cy="11" r="10" fill="#f7f7f7" stroke="#c6c6c6" stroke-width="1.1"/><path d="M11 5 V17 M5 11 H17" stroke="#b9b9b9" stroke-width="2.5"/></svg>
<svg style="left:23px;top:773.5px" width="12" height="9.5" viewBox="0 0 12 9.5"><path d="M0.7 0.5 L5 4.75 L0.7 9 M6.7 0.5 L11 4.75 L6.7 9" fill="none" stroke="#b2b2b2" stroke-width="1.6"/></svg>
<svg style="left:47px;top:174px" width="893" height="22" viewBox="0 0 893 22"><path d="M21.3 21.1 H891.5" stroke="#a2a2a2" stroke-width="1.3" fill="none"/><path d="M25.50 20.6 v-3.6 M31.05 20.6 v-2.2 M36.60 20.6 v-2.2 M42.15 20.6 v-2.2 M47.70 20.6 v-2.2 M53.25 20.6 v-7 M58.80 20.6 v-2.2 M64.35 20.6 v-2.2 M69.90 20.6 v-2.2 M75.45 20.6 v-2.2 M81.00 20.6 v-3.6 M86.55 20.6 v-2.2 M92.10 20.6 v-2.2 M97.65 20.6 v-2.2 M103.20 20.6 v-2.2 M108.75 20.6 v-7 M114.30 20.6 v-2.2 M119.85 20.6 v-2.2 M125.40 20.6 v-2.2 M130.95 20.6 v-2.2 M136.50 20.6 v-3.6 M142.05 20.6 v-2.2 M147.60 20.6 v-2.2 M153.15 20.6 v-2.2 M158.70 20.6 v-2.2 M164.25 20.6 v-7 M169.80 20.6 v-2.2 M175.35 20.6 v-2.2 M180.90 20.6 v-2.2 M186.45 20.6 v-2.2 M192.00 20.6 v-3.6 M197.55 20.6 v-2.2 M203.10 20.6 v-2.2 M208.65 20.6 v-2.2 M214.20 20.6 v-2.2 M219.75 20.6 v-7 M225.30 20.6 v-2.2 M230.85 20.6 v-2.2 M236.40 20.6 v-2.2 M241.95 20.6 v-2.2 M247.50 20.6 v-3.6 M253.05 20.6 v-2.2 M258.60 20.6 v-2.2 M264.15 20.6 v-2.2 M269.70 20.6 v-2.2 M275.25 20.6 v-7 M280.80 20.6 v-2.2 M286.35 20.6 v-2.2 M291.90 20.6 v-2.2 M297.45 20.6 v-2.2 M303.00 20.6 v-3.6 M308.55 20.6 v-2.2 M314.10 20.6 v-2.2 M319.65 20.6 v-2.2 M325.20 20.6 v-2.2 M330.75 20.6 v-7 M336.30 20.6 v-2.2 M341.85 20.6 v-2.2 M347.40 20.6 v-2.2 M352.95 20.6 v-2.2 M358.50 20.6 v-3.6 M364.05 20.6 v-2.2 M369.60 20.6 v-2.2 M375.15 20.6 v-2.2 M380.70 20.6 v-2.2 M386.25 20.6 v-7 M391.80 20.6 v-2.2 M397.35 20.6 v-2.2 M402.90 20.6 v-2.2 M408.45 20.6 v-2.2 M414.00 20.6 v-3.6 M419.55 20.6 v-2.2 M425.10 20.6 v-2.2 M430.65 20.6 v-2.2 M436.20 20.6 v-2.2 M441.75 20.6 v-7 M447.30 20.6 v-2.2 M452.85 20.6 v-2.2 M458.40 20.6 v-2.2 M463.95 20.6 v-2.2 M469.50 20.6 v-3.6 M475.05 20.6 v-2.2 M480.60 20.6 v-2.2 M486.15 20.6 v-2.2 M491.70 20.6 v-2.2 M497.25 20.6 v-7 M502.80 20.6 v-2.2 M508.35 20.6 v-2.2 M513.90 20.6 v-2.2 M519.45 20.6 v-2.2 M525.00 20.6 v-3.6 M530.55 20.6 v-2.2 M536.10 20.6 v-2.2 M541.65 20.6 v-2.2 M547.20 20.6 v-2.2 M552.75 20.6 v-7 M558.30 20.6 v-2.2 M563.85 20.6 v-2.2 M569.40 20.6 v-2.2 M574.95 20.6 v-2.2 M580.50 20.6 v-3.6 M586.05 20.6 v-2.2 M591.60 20.6 v-2.2 M597.15 20.6 v-2.2 M602.70 20.6 v-2.2 M608.25 20.6 v-7 M613.80 20.6 v-2.2 M619.35 20.6 v-2.2 M624.90 20.6 v-2.2 M630.45 20.6 v-2.2 M636.00 20.6 v-3.6 M641.55 20.6 v-2.2 M647.10 20.6 v-2.2 M652.65 20.6 v-2.2 M658.20 20.6 v-2.2 M663.75 20.6 v-7 M669.30 20.6 v-2.2 M674.85 20.6 v-2.2 M680.40 20.6 v-2.2 M685.95 20.6 v-2.2 M691.50 20.6 v-3.6 M697.05 20.6 v-2.2 M702.60 20.6 v-2.2 M708.15 20.6 v-2.2 M713.70 20.6 v-2.2 M719.25 20.6 v-7 M724.80 20.6 v-2.2 M730.35 20.6 v-2.2 M735.90 20.6 v-2.2 M741.45 20.6 v-2.2 M747.00 20.6 v-3.6 M752.55 20.6 v-2.2 M758.10 20.6 v-2.2 M763.65 20.6 v-2.2 M769.20 20.6 v-2.2 M774.75 20.6 v-7 M780.30 20.6 v-2.2 M785.85 20.6 v-2.2 M791.40 20.6 v-2.2 M796.95 20.6 v-2.2 M802.50 20.6 v-3.6 M808.05 20.6 v-2.2 M813.60 20.6 v-2.2 M819.15 20.6 v-2.2 M824.70 20.6 v-2.2 M830.25 20.6 v-7 M835.80 20.6 v-2.2 M841.35 20.6 v-2.2 M846.90 20.6 v-2.2 M852.45 20.6 v-2.2 M858.00 20.6 v-3.6 M863.55 20.6 v-2.2 M869.10 20.6 v-2.2 M874.65 20.6 v-2.2 M880.20 20.6 v-2.2 M885.75 20.6 v-7" stroke="#9a9a9a" stroke-width="1" fill="none"/></svg>
<div class="t" style="left:94.5px;top:176.4px;font-size:11px;color:#969696;letter-spacing:-0.35px">40</div>
<div class="t" style="left:150.0px;top:176.4px;font-size:11px;color:#969696;letter-spacing:-0.35px">20</div>
<div class="t" style="left:208.4px;top:176.4px;font-size:11px;color:#969696;letter-spacing:-0.35px">0</div>
<div class="t" style="left:261.0px;top:176.4px;font-size:11px;color:#969696;letter-spacing:-0.35px">20</div>
<div class="t" style="left:316.5px;top:176.4px;font-size:11px;color:#969696;letter-spacing:-0.35px">40</div>
<div class="t" style="left:372.0px;top:176.4px;font-size:11px;color:#969696;letter-spacing:-0.35px">60</div>
<div class="t" style="left:427.5px;top:176.4px;font-size:11px;color:#969696;letter-spacing:-0.35px">80</div>
<div class="t" style="left:480.1px;top:176.4px;font-size:11px;color:#969696;letter-spacing:-0.35px">100</div>
<div class="t" style="left:535.6px;top:176.4px;font-size:11px;color:#969696;letter-spacing:-0.35px">120</div>
<div class="t" style="left:591.1px;top:176.4px;font-size:11px;color:#969696;letter-spacing:-0.35px">140</div>
<div class="t" style="left:646.6px;top:176.4px;font-size:11px;color:#969696;letter-spacing:-0.35px">160</div>
<div class="t" style="left:702.1px;top:176.4px;font-size:11px;color:#969696;letter-spacing:-0.35px">180</div>
<div class="t" style="left:757.6px;top:176.4px;font-size:11px;color:#969696;letter-spacing:-0.35px">200</div>
<div class="t" style="left:813.1px;top:176.4px;font-size:11px;color:#969696;letter-spacing:-0.35px">220</div>
<div class="t" style="left:868.6px;top:176.4px;font-size:11px;color:#969696;letter-spacing:-0.35px">240</div>
<div class="t" style="left:910.3px;top:174.6px;font-size:13px;color:#a0a0a0;">毫米</div>
<svg style="left:53.5px;top:180px" width="11" height="10.5" viewBox="0 0 11 10.5"><path d="M1 1 L9.5 9.5 M1 9.5 H4 M1 9.5 V6.5 M9.5 1 H6.5 M9.5 1 V4" stroke="#222" stroke-width="1.1" stroke-dasharray="1.5 1" fill="none"/><path d="M3.5 3.5 L8 3.8 L6.2 5 L7.6 7.6 L5 6.2 L3.8 8 Z" fill="#222"/></svg>
<div class="a" style="left:47px;top:196px;width:23px;height:575px;overflow:hidden">
<svg style="left:0;top:0" width="23" height="575"><path d="M21.75 0 V575" stroke="#a2a2a2" stroke-width="1.3" fill="none"/><path d="M21.2 1.25 h-2.2 M21.2 6.80 h-6.4 M21.2 12.35 h-2.2 M21.2 17.90 h-2.2 M21.2 23.45 h-2.2 M21.2 29.00 h-2.2 M21.2 34.55 h-3.6 M21.2 40.10 h-2.2 M21.2 45.65 h-2.2 M21.2 51.20 h-2.2 M21.2 56.75 h-2.2 M21.2 62.30 h-6.4 M21.2 67.85 h-2.2 M21.2 73.40 h-2.2 M21.2 78.95 h-2.2 M21.2 84.50 h-2.2 M21.2 90.05 h-3.6 M21.2 95.60 h-2.2 M21.2 101.15 h-2.2 M21.2 106.70 h-2.2 M21.2 112.25 h-2.2 M21.2 117.80 h-6.4 M21.2 123.35 h-2.2 M21.2 128.90 h-2.2 M21.2 134.45 h-2.2 M21.2 140.00 h-2.2 M21.2 145.55 h-3.6 M21.2 151.10 h-2.2 M21.2 156.65 h-2.2 M21.2 162.20 h-2.2 M21.2 167.75 h-2.2 M21.2 173.30 h-6.4 M21.2 178.85 h-2.2 M21.2 184.40 h-2.2 M21.2 189.95 h-2.2 M21.2 195.50 h-2.2 M21.2 201.05 h-3.6 M21.2 206.60 h-2.2 M21.2 212.15 h-2.2 M21.2 217.70 h-2.2 M21.2 223.25 h-2.2 M21.2 228.80 h-6.4 M21.2 234.35 h-2.2 M21.2 239.90 h-2.2 M21.2 245.45 h-2.2 M21.2 251.00 h-2.2 M21.2 256.55 h-3.6 M21.2 262.10 h-2.2 M21.2 267.65 h-2.2 M21.2 273.20 h-2.2 M21.2 278.75 h-2.2 M21.2 284.30 h-6.4 M21.2 289.85 h-2.2 M21.2 295.40 h-2.2 M21.2 300.95 h-2.2 M21.2 306.50 h-2.2 M21.2 312.05 h-3.6 M21.2 317.60 h-2.2 M21.2 323.15 h-2.2 M21.2 328.70 h-2.2 M21.2 334.25 h-2.2 M21.2 339.80 h-6.4 M21.2 345.35 h-2.2 M21.2 350.90 h-2.2 M21.2 356.45 h-2.2 M21.2 362.00 h-2.2 M21.2 367.55 h-3.6 M21.2 373.10 h-2.2 M21.2 378.65 h-2.2 M21.2 384.20 h-2.2 M21.2 389.75 h-2.2 M21.2 395.30 h-6.4 M21.2 400.85 h-2.2 M21.2 406.40 h-2.2 M21.2 411.95 h-2.2 M21.2 417.50 h-2.2 M21.2 423.05 h-3.6 M21.2 428.60 h-2.2 M21.2 434.15 h-2.2 M21.2 439.70 h-2.2 M21.2 445.25 h-2.2 M21.2 450.80 h-6.4 M21.2 456.35 h-2.2 M21.2 461.90 h-2.2 M21.2 467.45 h-2.2 M21.2 473.00 h-2.2 M21.2 478.55 h-3.6 M21.2 484.10 h-2.2 M21.2 489.65 h-2.2 M21.2 495.20 h-2.2 M21.2 500.75 h-2.2 M21.2 506.30 h-6.4 M21.2 511.85 h-2.2 M21.2 517.40 h-2.2 M21.2 522.95 h-2.2 M21.2 528.50 h-2.2 M21.2 534.05 h-3.6 M21.2 539.60 h-2.2 M21.2 545.15 h-2.2 M21.2 550.70 h-2.2 M21.2 556.25 h-2.2 M21.2 561.80 h-6.4 M21.2 567.35 h-2.2 M21.2 572.90 h-2.2" stroke="#9a9a9a" stroke-width="1" fill="none"/></svg>
<div class="t" style="left:-5.4px;top:1.3px;width:30px;height:11px;text-align:center;font-size:11.5px;line-height:11px;color:#969696;letter-spacing:0.5px;transform:rotate(-90deg)">240</div>
<div class="t" style="left:-5.4px;top:56.8px;width:30px;height:11px;text-align:center;font-size:11.5px;line-height:11px;color:#969696;letter-spacing:0.5px;transform:rotate(-90deg)">220</div>
<div class="t" style="left:-5.4px;top:112.3px;width:30px;height:11px;text-align:center;font-size:11.5px;line-height:11px;color:#969696;letter-spacing:0.5px;transform:rotate(-90deg)">200</div>
<div class="t" style="left:-5.4px;top:167.8px;width:30px;height:11px;text-align:center;font-size:11.5px;line-height:11px;color:#969696;letter-spacing:0.5px;transform:rotate(-90deg)">180</div>
<div class="t" style="left:-5.4px;top:223.3px;width:30px;height:11px;text-align:center;font-size:11.5px;line-height:11px;color:#969696;letter-spacing:0.5px;transform:rotate(-90deg)">160</div>
<div class="t" style="left:-5.4px;top:278.8px;width:30px;height:11px;text-align:center;font-size:11.5px;line-height:11px;color:#969696;letter-spacing:0.5px;transform:rotate(-90deg)">140</div>
<div class="t" style="left:-5.4px;top:334.3px;width:30px;height:11px;text-align:center;font-size:11.5px;line-height:11px;color:#969696;letter-spacing:0.5px;transform:rotate(-90deg)">120</div>
<div class="t" style="left:-5.4px;top:389.8px;width:30px;height:11px;text-align:center;font-size:11.5px;line-height:11px;color:#969696;letter-spacing:0.5px;transform:rotate(-90deg)">100</div>
<div class="t" style="left:-5.4px;top:445.3px;width:30px;height:11px;text-align:center;font-size:11.5px;line-height:11px;color:#969696;letter-spacing:0.5px;transform:rotate(-90deg)">80</div>
<div class="t" style="left:-5.4px;top:500.8px;width:30px;height:11px;text-align:center;font-size:11.5px;line-height:11px;color:#969696;letter-spacing:0.5px;transform:rotate(-90deg)">60</div>
<div class="t" style="left:-4.5px;top:553px;width:27px;height:13px;font-size:13px;line-height:13px;color:#a0a0a0;transform:rotate(-90deg)">毫米</div>
</div>
<div class="a" style="left:210.5px;top:194px;width:1.2px;height:556px;background:#9b9b9b;"></div>
<div class="a" style="left:792.5px;top:194px;width:7px;height:556px;background:#bfbfbf;"></div>
<svg style="left:0;top:0" width="1000" height="837" viewBox="0 0 1000 837"><circle cx="525.8" cy="480.6" r="152.2" fill="none" stroke="#2a2a2a" stroke-width="0.9"/><text x="525.8" y="358.3" transform="rotate(-92.90 525.8 480.6)" text-anchor="middle" dominant-baseline="central" font-size="33.5" fill="#111" font-family="Noto Serif CJK SC,Liberation Serif,serif" font-weight="300">百</text><text x="525.8" y="358.3" transform="rotate(-72.26 525.8 480.6)" text-anchor="middle" dominant-baseline="central" font-size="33.5" fill="#111" font-family="Noto Serif CJK SC,Liberation Serif,serif" font-weight="300">度</text><text x="525.8" y="358.3" transform="rotate(-51.61 525.8 480.6)" text-anchor="middle" dominant-baseline="central" font-size="33.5" fill="#111" font-family="Noto Serif CJK SC,Liberation Serif,serif" font-weight="300">经</text><text x="525.8" y="358.3" transform="rotate(-30.97 525.8 480.6)" text-anchor="middle" dominant-baseline="central" font-size="33.5" fill="#111" font-family="Noto Serif CJK SC,Liberation Serif,serif" font-weight="300">验</text><text x="525.8" y="358.3" transform="rotate(-10.32 525.8 480.6)" text-anchor="middle" dominant-baseline="central" font-size="33.5" fill="#111" font-family="Noto Serif CJK SC,Liberation Serif,serif" font-weight="300">让</text><text x="525.8" y="358.3" transform="rotate(10.32 525.8 480.6)" text-anchor="middle" dominant-baseline="central" font-size="33.5" fill="#111" font-family="Noto Serif CJK SC,Liberation Serif,serif" font-weight="300">生</text><text x="525.8" y="358.3" transform="rotate(30.97 525.8 480.6)" text-anchor="middle" dominant-baseline="central" font-size="33.5" fill="#111" font-family="Noto Serif CJK SC,Liberation Serif,serif" font-weight="300">活</text><text x="525.8" y="358.3" transform="rotate(51.61 525.8 480.6)" text-anchor="middle" dominant-baseline="central" font-size="33.5" fill="#111" font-family="Noto Serif CJK SC,Liberation Serif,serif" font-weight="300">更</text><text x="525.8" y="358.3" transform="rotate(72.26 525.8 480.6)" text-anchor="middle" dominant-baseline="central" font-size="33.5" fill="#111" font-family="Noto Serif CJK SC,Liberation Serif,serif" font-weight="300">美</text><text x="525.8" y="358.3" transform="rotate(92.90 525.8 480.6)" text-anchor="middle" dominant-baseline="central" font-size="33.5" fill="#111" font-family="Noto Serif CJK SC,Liberation Serif,serif" font-weight="300">好</text><polygon points="310.8,555.1 323.4,595.4 365.8,595.4 331.4,620 345,660 310.8,634.5 276.4,660 290,620 256,595.4 297.7,595.4" fill="none" stroke="#333" stroke-width="0.9"/><rect x="309.2" y="553.5" width="3.2" height="3.2" fill="#fff" stroke="#111" stroke-width="0.8"/><rect x="321.79999999999995" y="593.8" width="3.2" height="3.2" fill="#fff" stroke="#111" stroke-width="0.8"/><rect x="364.2" y="593.8" width="3.2" height="3.2" fill="#fff" stroke="#111" stroke-width="0.8"/><rect x="329.79999999999995" y="618.4" width="3.2" height="3.2" fill="#fff" stroke="#111" stroke-width="0.8"/><rect x="343.4" y="658.4" width="3.2" height="3.2" fill="#fff" stroke="#111" stroke-width="0.8"/><rect x="309.2" y="632.9" width="3.2" height="3.2" fill="#fff" stroke="#111" stroke-width="0.8"/><rect x="274.79999999999995" y="658.4" width="3.2" height="3.2" fill="#fff" stroke="#111" stroke-width="0.8"/><rect x="288.4" y="618.4" width="3.2" height="3.2" fill="#fff" stroke="#111" stroke-width="0.8"/><rect x="254.4" y="593.8" width="3.2" height="3.2" fill="#fff" stroke="#111" stroke-width="0.8"/><rect x="296.09999999999997" y="593.8" width="3.2" height="3.2" fill="#fff" stroke="#111" stroke-width="0.8"/><rect x="245.1" y="544.5" width="7" height="7" fill="#000"/><rect x="245.1" y="603.3" width="7" height="7" fill="#000"/><rect x="245.1" y="662.7" width="7" height="7" fill="#000"/><rect x="306.9" y="544.5" width="7" height="7" fill="#000"/><rect x="306.9" y="662.7" width="7" height="7" fill="#000"/><rect x="368.6" y="544.5" width="7" height="7" fill="#000"/><rect x="368.6" y="603.3" width="7" height="7" fill="#000"/><rect x="368.6" y="662.7" width="7" height="7" fill="#000"/><path d="M308.3 605 L313.7 610.4 M313.7 605 L308.3 610.4" stroke="#000" stroke-width="1.6"/></svg>
<div class="a" style="left:919px;top:196px;width:21px;height:554px;background:#ffffff;"></div>
<div class="a" style="left:919.4px;top:196.5px;width:18.6px;height:19px;background:#f0f0f0;"></div>
<svg style="left:923.5px;top:202px" width="11" height="7" viewBox="0 0 11 7"><path d="M0.8 6.2 L5.5 1.4 L10.2 6.2" fill="none" stroke="#333" stroke-width="1.7"/></svg>
<div class="a" style="left:919.4px;top:397.4px;width:18.4px;height:160.8px;background:#cdcdcd;"></div>
<div class="a" style="left:919.4px;top:729.5px;width:18.6px;height:20.5px;background:#f0f0f0;"></div>
<svg style="left:923.5px;top:735.8px" width="11" height="7" viewBox="0 0 11 7"><path d="M0.8 0.8 L5.5 5.6 L10.2 0.8" fill="none" stroke="#333" stroke-width="1.7"/></svg>
<div class="a" style="left:940px;top:148px;width:4px;height:646px;background:#f3f3f3;"></div>
<div class="a" style="left:941.3px;top:150px;width:1px;height:640px;background:#dcdcdc;"></div>
<div class="a" style="left:944px;top:148px;width:24px;height:646px;background:#f0f0f0;"></div>
<svg style="left:950px;top:154px" width="12" height="12" viewBox="0 0 12 12"><path d="M1 1 L11 11 M11 1 L1 11" stroke="#a2a2a2" stroke-width="2"/></svg>
<div class="a" style="left:944.5px;top:172.5px;width:22.7px;height:80.0px;background:#dedede;"></div>
<div class="t" style="left:962.4px;top:198.5px;font-size:15.5px;color:#111;transform-origin:0 0;transform:rotate(90deg)">提示</div>
<div class="a" style="left:944.5px;top:253.5px;width:22.7px;height:113.0px;background:#dedede;"></div>
<div class="t" style="left:962.4px;top:281.8px;font-size:15.5px;color:#111;transform-origin:0 0;transform:rotate(90deg)">对象属性</div>
<div class="a" style="left:944.5px;top:367.5px;width:22.7px;height:129.0px;background:#dedede;"></div>
<div class="t" style="left:962.4px;top:395.0px;font-size:15.5px;color:#111;transform-origin:0 0;transform:rotate(90deg)">对象管理器</div>
<div class="a" style="left:944.5px;top:497.5px;width:22.7px;height:135.0px;background:#b8b8b8;"></div>
<div class="t" style="left:962.4px;top:523.8px;font-size:15.5px;color:#111;transform-origin:0 0;transform:rotate(90deg)">对齐与分布...</div>
<div class="a" style="left:944.5px;top:634px;width:22.7px;height:37px;background:#dcdcdc;"></div>
<svg style="left:946px;top:176px" width="20" height="20" viewBox="0 0 20 20"><path d="M1 1.5 L1 13 L4 10.4 L6.4 15.6 L8.6 14.6 L6.2 9.6 L10 9.4 Z" fill="#f4f4fb" stroke="#55577f" stroke-width="1.1"/><text x="10.5" y="10.5" font-size="11" font-weight="700" fill="#3a3c64" font-family="Liberation Sans,sans-serif">?</text></svg>
<svg style="left:946.5px;top:258px" width="19" height="17" viewBox="0 0 19 17"><path d="M1 5.5 L5.5 1 L10 5.5 L5.5 10 Z" fill="#f4f4fb" stroke="#55577f" stroke-width="1"/><path d="M2.6 5.5 H8.4 L5.5 8.4 Z" fill="#f0a020"/><rect x="7.5" y="5" width="10.5" height="10.5" fill="#b9badb" stroke="#6d6f9c" stroke-width="1"/><path d="M11 5 V15.5 M14.5 5 V15.5 M7.5 8.5 H18 M7.5 12 H18" stroke="#eef" stroke-width="0.8"/></svg>
<svg style="left:947px;top:372px" width="18" height="18" viewBox="0 0 18 18"><rect x="0.6" y="0.6" width="4" height="4" fill="#fff" stroke="#77799c" stroke-width="1"/><path d="M2.6 5 V16 M2.6 8 H7 M2.6 12 H7 M2.6 16 H7" stroke="#77799c" stroke-width="0.9" stroke-dasharray="1 1" fill="none"/><rect x="7.5" y="5" width="3.4" height="3.4" fill="#fff" stroke="#77799c" stroke-width="1"/><rect x="12.5" y="5" width="3.4" height="3.4" fill="#fff" stroke="#77799c" stroke-width="1"/><rect x="7.5" y="10" width="3.4" height="3.4" fill="#fff" stroke="#77799c" stroke-width="1"/><rect x="12.5" y="10" width="3.4" height="3.4" fill="#fff" stroke="#77799c" stroke-width="1"/><rect x="12.5" y="14.6" width="3.4" height="3" fill="#fff" stroke="#77799c" stroke-width="1"/></svg>
<svg style="left:948px;top:502.5px" width="16" height="16" viewBox="0 0 16 16"><path d="M1 0 V15.5" stroke="#8a8cae" stroke-width="1" stroke-dasharray="1 1"/><rect x="3.2" y="1" width="6" height="13.4" fill="#f8f8fc" stroke="#a6a8c0" stroke-width="1.1"/><rect x="10.4" y="8" width="4" height="6.4" fill="#f8f8fc" stroke="#a6a8c0" stroke-width="1.1"/></svg>
<svg style="left:948px;top:640px" width="16" height="26" viewBox="0 0 16 26"><path d="M0 3.5 H15 M3.5 0 V18" stroke="#8a8cb4" stroke-width="1.1" stroke-dasharray="1.6 1.2" fill="none"/></svg>
<div class="t" style="left:948px;top:655px;font-size:12px;color:#111;transform-origin:0 0;transform:rotate(90deg) translate(0,-100%);letter-spacing:0.5px">...</div>
<svg style="left:944.5px;top:692px" width="22" height="22" viewBox="0 0 22 22"><circle cx="11" cy="11" r="10" fill="#f7f7f7" stroke="#c6c6c6" stroke-width="1.1"/><path d="M11 5 V17 M5 11 H17" stroke="#b9b9b9" stroke-width="2.5"/></svg>
<div class="a" style="left:968px;top:148px;width:21.2px;height:646px;background:#f6f6f6;"></div>
<svg style="left:971px;top:154px" width="15" height="3" viewBox="0 0 15 3"><path d="M0 1 H15" stroke="#8a8a8a" stroke-width="1.3" stroke-dasharray="1.3 2"/></svg>
<svg style="left:975px;top:161px" width="6" height="10" viewBox="0 0 6 10"><path d="M0 0 V10 L6 5 Z" fill="#111"/></svg>
<svg style="left:971px;top:177px" width="15" height="16" viewBox="0 0 15 16"><path d="M1 15 L2 12 L8.4 5.6 L10.4 7.6 L4 14 Z" fill="#cfcfcf"/><path d="M7.6 3.8 L12.2 8.4 M9.4 5.4 L12 1.4 C13.2 0 15.2 1.8 13.8 3.2 L10.6 6.6" stroke="#c4c4c4" stroke-width="1.8" fill="#c4c4c4"/></svg>
<svg style="left:973px;top:199px" width="11" height="7" viewBox="0 0 11 7"><path d="M0.8 6.2 L5.5 1.4 L10.2 6.2" fill="none" stroke="#cfcfcf" stroke-width="1.7"/></svg>
<div class="a" style="left:968.3px;top:215.5px;width:20.7px;height:529.1px;background:#4a4a4a;"></div>
<div class="a" style="left:969.3px;top:216.3px;width:18.9px;height:19.350000000000012px;background:#ffffff;"></div>
<svg style="left:969.3px;top:216.3px" width="18.9" height="19.350000000000012" viewBox="0 0 18.9 19.350000000000012"><path d="M0 0 L18.9 19.4 M18.9 0 L0 19.4" stroke="#222" stroke-width="1"/></svg>
<div class="a" style="left:969.1px;top:236.55px;width:19.2px;height:19.650000000000013px;background:#000000;"></div>
<div class="a" style="left:969.1px;top:257.1px;width:19.2px;height:19.649999999999956px;background:#1a1a1a;"></div>
<div class="a" style="left:969.1px;top:277.65px;width:19.2px;height:19.650000000000013px;background:#333333;"></div>
<div class="a" style="left:969.1px;top:298.2px;width:19.2px;height:19.650000000000013px;background:#4d4d4d;"></div>
<div class="a" style="left:969.1px;top:318.75px;width:19.2px;height:19.650000000000013px;background:#666666;"></div>
<div class="a" style="left:969.1px;top:339.3px;width:19.2px;height:19.650000000000013px;background:#808080;"></div>
<div class="a" style="left:969.1px;top:359.85px;width:19.2px;height:19.649999999999956px;background:#999999;"></div>
<div class="a" style="left:969.1px;top:380.4px;width:19.2px;height:19.65000000000007px;background:#b3b3b3;"></div>
<div class="a" style="left:969.1px;top:400.95000000000005px;width:19.2px;height:19.649999999999956px;background:#cccccc;"></div>
<div class="a" style="left:969.1px;top:421.5px;width:19.2px;height:19.650000000000013px;background:#e6e6e6;"></div>
<div class="a" style="left:969.1px;top:442.05px;width:19.2px;height:19.650000000000013px;background:#ffffff;"></div>
<div class="a" style="left:969.1px;top:462.6px;width:19.2px;height:19.650000000000013px;background:#0000ff;"></div>
<div class="a" style="left:969.1px;top:483.15000000000003px;width:19.2px;height:19.649999999999956px;background:#00ffff;"></div>
<div class="a" style="left:969.1px;top:503.7px;width:19.2px;height:19.650000000000013px;background:#00ff00;"></div>
<div class="a" style="left:969.1px;top:524.25px;width:19.2px;height:19.649999999999956px;background:#ffff00;"></div>
<div class="a" style="left:969.1px;top:544.8px;width:19.2px;height:19.65000000000007px;background:#ff0000;"></div>
<div class="a" style="left:969.1px;top:565.35px;width:19.2px;height:19.65000000000007px;background:#ff00ff;"></div>
<div class="a" style="left:969.1px;top:585.9000000000001px;width:19.2px;height:19.649999999999956px;background:#9900cc;"></div>
<div class="a" style="left:969.1px;top:606.45px;width:19.2px;height:19.649999999999956px;background:#ff6600;"></div>
<div class="a" style="left:969.1px;top:627.0px;width:19.2px;height:19.649999999999956px;background:#ff99cc;"></div>
<div class="a" style="left:969.1px;top:647.55px;width:19.2px;height:19.65000000000007px;background:#663333;"></div>
<div class="a" style="left:969.1px;top:668.1px;width:19.2px;height:19.65000000000007px;background:#ccccff;"></div>
<div class="a" style="left:969.1px;top:688.6500000000001px;width:19.2px;height:19.649999999999956px;background:#9999ff;"></div>
<div class="a" style="left:969.1px;top:709.2px;width:19.2px;height:19.649999999999956px;background:#6699ff;"></div>
<div class="a" style="left:969.1px;top:729.75px;width:19.2px;height:15.350000000000023px;background:#6666ff;"></div>
<svg style="left:973px;top:751px" width="11" height="7" viewBox="0 0 11 7"><path d="M0.8 0.8 L5.5 5.8 L10.2 0.8" fill="none" stroke="#b8b8b8" stroke-width="1.9"/></svg>
<svg style="left:972.5px;top:771px" width="12" height="9.5" viewBox="0 0 12 9.5"><path d="M0.7 0.5 L5 4.75 L0.7 9 M6.7 0.5 L11 4.75 L6.7 9" fill="none" stroke="#b5b5b5" stroke-width="1.6"/></svg>
<div class="a" style="left:69px;top:750px;width:434px;height:21px;background:#f7f7f7;"></div>
<div class="a" style="left:69px;top:749.6px;width:434px;height:1.1px;background:#a4a4a4;"></div>
<svg style="left:74.3px;top:754.3px" width="10.5" height="13.5" viewBox="0 0 10.5 13.5"><g transform="scale(0.9)"><path d="M0.6 0.6 H6.6 L9.9 3.9 V12.9 H0.6 Z" fill="#fff" stroke="#111" stroke-width="1.1"/><path d="M6.4 0.8 V4.2 H9.8" fill="none" stroke="#111" stroke-width="0.9"/><path d="M5.2 5.6 V11.2 M2.4 8.4 H8" stroke="#111" stroke-width="1.3"/></g></svg>
<svg style="left:95.5px;top:755.5px" width="8" height="9" viewBox="0 0 8 9"><path d="M0.8 0 V9" stroke="#7c7c7c" stroke-width="1.5"/><path d="M7.6 0 V9 L2.4 4.5 Z" fill="#7c7c7c"/></svg>
<svg style="left:118.5px;top:755.5px" width="6" height="9" viewBox="0 0 6 9"><path d="M5.6 0 V9 L0.4 4.5 Z" fill="#666"/></svg>
<div class="t" style="left:154.3px;top:755.2px;font-size:14px;color:#111;transform-origin:0 0;transform:scaleX(0.973);">1 / 1</div>
<svg style="left:212.5px;top:755.5px" width="6" height="9" viewBox="0 0 6 9"><path d="M0.4 0 V9 L5.6 4.5 Z" fill="#666"/></svg>
<svg style="left:230.5px;top:755.5px" width="8" height="9" viewBox="0 0 8 9"><path d="M7.2 0 V9" stroke="#7c7c7c" stroke-width="1.5"/><path d="M0.4 0 V9 L5.6 4.5 Z" fill="#7c7c7c"/></svg>
<svg style="left:251.3px;top:754.3px" width="10.5" height="13.5" viewBox="0 0 10.5 13.5"><g transform="scale(0.9)"><path d="M0.6 0.6 H6.6 L9.9 3.9 V12.9 H0.6 Z" fill="#fff" stroke="#111" stroke-width="1.1"/><path d="M6.4 0.8 V4.2 H9.8" fill="none" stroke="#111" stroke-width="0.9"/><path d="M5.2 5.6 V11.2 M2.4 8.4 H8" stroke="#111" stroke-width="1.3"/></g></svg>
<svg style="left:267px;top:750px" width="60" height="21" viewBox="0 0 60 21"><path d="M0.5 20.5 V0.5 H48 L57.5 10 V20.5" fill="#fff" stroke="#8a8a8a" stroke-width="1"/></svg>
<div class="t" style="left:283.5px;top:755.3px;font-size:13.5px;color:#111;">页 1</div>
<svg style="left:495px;top:754px" width="6" height="16" viewBox="0 0 6 16"><path d="M1.5 0 V16 M4.5 0 V16" stroke="#a0a0a0" stroke-width="1.2" stroke-dasharray="1.2 1.6"/></svg>
<div class="a" style="left:503px;top:750.5px;width:416px;height:20.5px;background:#ffffff;"></div>
<div class="a" style="left:502.3px;top:750px;width:1.1px;height:21px;background:#a4a4a4;"></div>
<div class="a" style="left:503.5px;top:751px;width:20.5px;height:18.5px;background:#f0f0f0;"></div>
<svg style="left:509.5px;top:754.5px" width="7" height="11" viewBox="0 0 7 11"><path d="M6 0.8 L1.2 5.5 L6 10.2" fill="none" stroke="#333" stroke-width="1.7"/></svg>
<div class="a" style="left:590.5px;top:751px;width:236px;height:18.5px;background:#cdcdcd;"></div>
<div class="a" style="left:897px;top:751px;width:20px;height:18.5px;background:#f0f0f0;"></div>
<svg style="left:904px;top:754.5px" width="7" height="11" viewBox="0 0 7 11"><path d="M1 0.8 L5.8 5.5 L1 10.2" fill="none" stroke="#333" stroke-width="1.7"/></svg>
<div class="a" style="left:919px;top:750px;width:21px;height:21px;background:#fbfbfb;"></div>
<svg style="left:923.5px;top:754.5px" width="12.5" height="12.5" viewBox="0 0 15 15"><circle cx="5.5" cy="5.5" r="4.4" fill="#f8f8ff" stroke="#333" stroke-width="1.2"/><path d="M3.4 5.5 H7.6 M5.5 3.4 V7.6" stroke="#333" stroke-width="1"/><path d="M8.8 8.8 L13.6 13.6" stroke="#23244e" stroke-width="2.2"/></svg>
<div class="a" style="left:47px;top:771px;width:893px;height:23px;background:#f5f5f5;"></div>
<div class="a" style="left:47px;top:771px;width:893px;height:1px;background:#e6e6e6;"></div>
<svg style="left:51px;top:775px" width="3" height="17" viewBox="0 0 3 17"><path d="M1.5 0 V17" stroke="#9a9a9a" stroke-width="1.3" stroke-dasharray="1.2 2"/></svg>
<svg style="left:61.5px;top:777.5px" width="6" height="10" viewBox="0 0 6 10"><path d="M0 0 V10 L6 5 Z" fill="#111"/></svg>
<svg style="left:75px;top:774px" width="16" height="17" viewBox="0 0 16 17"><path d="M0.6 16.4 L1.6 13 L8.4 6.2 L10.6 8.4 L3.8 15.2 Z" fill="#3c8c7c" stroke="#2a5c5c" stroke-width="0.6"/><path d="M7.6 4.4 L12.4 9.2 M9.6 6 L12.2 2 C13.4 0.6 15.4 2.4 14 3.8 L10.8 7.2" stroke="#1d1e3a" stroke-width="1.9" fill="#1d1e3a"/></svg>
<svg style="left:97.5px;top:777px" width="8" height="12" viewBox="0 0 8 12"><path d="M7 0.8 L1.4 6 L7 11.2" fill="none" stroke="#c8c8c8" stroke-width="2"/></svg>
<div class="a" style="left:112.5px;top:772.5px;width:21.5px;height:21px;box-sizing:border-box;background:#fff;border:1px solid #6e6e6e"></div>
<svg style="left:113.5px;top:773.5px" width="19.5" height="19" viewBox="0 0 19.5 19"><path d="M0 0 L19.5 19 M19.5 0 L0 19" stroke="#333" stroke-width="0.9"/></svg>
<div class="t" style="left:306px;top:775px;font-size:15.5px;color:#b4b4b4;font-style:italic;transform-origin:0 0;transform:scaleX(1.004)">将颜色(或对象)拖动至此处，以便将这些颜色与文档存储在一起</div>
<div class="a" style="left:12px;top:794.5px;width:977px;height:38.2px;background:#f7f7f7;"></div>
<div class="a" style="left:12px;top:794px;width:977px;height:1px;background:#e2e2e2;"></div>
<div class="t" style="left:17px;top:807px;font-size:15px;color:#111;transform-origin:0 0;transform:scaleX(0.922);">( -51.151, 149.843 )</div>
<div class="a" style="left:151px;top:806.6px;width:14px;height:14px;box-sizing:border-box;background:#fff;border:1.4px solid #111"></div>
<svg style="left:155.5px;top:809.6px" width="5.5" height="8" viewBox="0 0 5.5 8"><path d="M0 0 V8 L5.5 4 Z" fill="#111"/></svg>
<div class="t" style="left:202.4px;top:806.8px;font-size:15.5px;color:#111;transform-origin:0 0;transform:scaleX(0.985)">星形 (5个边) 在 图层 1 上</div>
<svg style="left:444px;top:806px" width="16" height="16" viewBox="0 0 16 16"><rect x="0.6" y="0.6" width="14.4" height="11.4" rx="1" fill="#dadbe8" stroke="#7b7da6" stroke-width="1.1"/><rect x="2.4" y="2.4" width="10.8" height="7.8" fill="#c8503c"/><rect x="3.4" y="3.4" width="8.8" height="5.8" fill="#7aa25a"/><circle cx="7.8" cy="6.3" r="2.5" fill="#e8e8f2" stroke="#4a5ca6" stroke-width="1"/><path d="M3.6 14.4 H12" stroke="#8a8cb4" stroke-width="1.2"/></svg>
<svg style="left:473px;top:803.8px" width="17" height="17" viewBox="0 0 17 17"><path d="M1 8.4 L7.6 1.8 L14 8.4 L7.6 15 Z" fill="#fafafc" stroke="#23244e" stroke-width="1.2"/><path d="M3 8.8 H12.8 L7.6 14 Z" fill="#ec7a12"/><path d="M4.4 5.2 C5 1.4 8.4 0.4 9 3" fill="none" stroke="#23244e" stroke-width="1"/><path d="M14.6 9.5 C15.6 11.5 15.8 13 14.8 14" stroke="#ec7a12" stroke-width="1.5" fill="none"/></svg>
<div class="a" style="left:495px;top:803px;width:21px;height:21.5px;box-sizing:border-box;background:#fff;border:1px solid #555"></div>
<svg style="left:496px;top:804px" width="19" height="19.5" viewBox="0 0 19 19.5"><path d="M0 0 L19 19.5 M19 0 L0 19.5" stroke="#222" stroke-width="1.1"/></svg>
<div class="t" style="left:518.8px;top:807.3px;font-size:15.5px;color:#111;">无</div>
<div class="a" style="left:722px;top:799px;width:1px;height:28px;background:#dcdcdc;"></div>
<svg style="left:731px;top:805.5px" width="9" height="15" viewBox="0 0 9 15"><path d="M4.5 0.6 C7.6 3.8 8.2 7.4 6.4 10.6 H2.6 C0.8 7.4 1.4 3.8 4.5 0.6 Z" fill="#f2f2fa" stroke="#34366b" stroke-width="1"/><path d="M4.5 3.4 V8.4" stroke="#34366b" stroke-width="0.9"/><rect x="0.6" y="12" width="7.8" height="2.2" fill="#34366b"/></svg>
<div class="a" style="left:749.3px;top:803.5px;width:20.8px;height:20.8px;background:#000;"></div>
<div class="t" style="left:774px;top:807px;font-size:15px;color:#111;transform-origin:0 0;transform:scaleX(0.919);z-index:5">R: 0 G: 0 B: 0 (#000000) &nbsp;.567 pt</div>
<div class="a" style="left:45.3px;top:425px;width:176.5px;height:269.5px;box-sizing:border-box;background:#fff;border:1px solid #bdbdbd"></div>
<div class="a" style="left:46.3px;top:426px;width:31.7px;height:267.5px;background:#f1f1f1;"></div>
<div class="a" style="left:46.3px;top:451.8px;width:174.6px;height:25px;box-sizing:border-box;background:#dbeaf8;border:1px solid #8fc3f1"></div>
<div class="a" style="left:47.3px;top:452.8px;width:22px;height:23px;background:#92c6f6;"></div>
<div class="a" style="left:78px;top:506px;width:141px;height:1px;background:#dddddd;"></div>
<div class="a" style="left:78px;top:563.2px;width:141px;height:1px;background:#dddddd;"></div>
<div class="t" style="left:80.6px;top:431.90000000000003px;font-size:15.8px;color:#111;">多边形<span style="font-size:14.5px;letter-spacing:-0.9px">(<span class="u">P</span>)</span></div>
<div class="t" style="left:193.5px;top:432.0px;font-size:15px;color:#111;transform-origin:0 0;transform:scaleX(0.920);">Y</div>
<div class="t" style="left:80.6px;top:456.8px;font-size:15.8px;color:#111;">星形<span style="font-size:14.5px;letter-spacing:-0.9px">(<span class="u">S</span>)</span></div>
<div class="t" style="left:80.6px;top:483.0px;font-size:15.8px;color:#111;">复杂星形<span style="font-size:14.5px;letter-spacing:-0.9px">(<span class="u">C</span>)</span></div>
<div class="t" style="left:80.6px;top:514.9px;font-size:15.8px;color:#111;">图纸<span style="font-size:14.5px;letter-spacing:-0.9px">(<span class="u">G</span>)</span></div>
<div class="t" style="left:191.89999999999998px;top:515.0px;font-size:15px;color:#111;transform-origin:0 0;transform:scaleX(0.920);">D</div>
<div class="t" style="left:80.6px;top:540.6px;font-size:15.8px;color:#111;">螺纹<span style="font-size:14.5px;letter-spacing:-0.9px">(<span class="u">S</span>)</span></div>
<div class="t" style="left:192.39999999999998px;top:540.7px;font-size:15px;color:#111;transform-origin:0 0;transform:scaleX(0.920);">A</div>
<div class="t" style="left:80.6px;top:572.6px;font-size:15.8px;color:#111;">基本形状<span style="font-size:14.5px;letter-spacing:-0.9px">(<span class="u">B</span>)</span></div>
<div class="t" style="left:80.6px;top:598.1px;font-size:15.8px;color:#111;">箭头形状<span style="font-size:14.5px;letter-spacing:-0.9px">(<span class="u">A</span>)</span></div>
<div class="t" style="left:80.6px;top:623.4px;font-size:15.8px;color:#111;">流程图形状<span style="font-size:14.5px;letter-spacing:-0.9px">(<span class="u">F</span>)</span></div>
<div class="t" style="left:80.6px;top:648.6px;font-size:15.8px;color:#111;">标题形状<span style="font-size:14.5px;letter-spacing:-0.9px">(<span class="u">N</span>)</span></div>
<div class="t" style="left:80.6px;top:673.8000000000001px;font-size:15.8px;color:#111;">标注形状<span style="font-size:14.5px;letter-spacing:-0.9px">(<span class="u">C</span>)</span></div>
<svg style="left:51.5px;top:433.5px" width="15" height="12.5" viewBox="0 0 15 12.5"><path d="M4 0.6 H11 L14.4 6.2 L11 11.8 H4 L0.6 6.2 Z" fill="url(#g1)" stroke="#77799c" stroke-width="1.1"/></svg>
<svg style="left:52px;top:457px" width="14" height="14" viewBox="0 0 14 14"><polygon points="7.00,0.70 8.70,4.95 13.28,5.26 9.76,8.20 10.88,12.64 7.00,10.20 3.12,12.64 4.24,8.20 0.72,5.26 5.30,4.95" fill="#fff" stroke="#8a8cae" stroke-width="1"/></svg>
<svg style="left:51.5px;top:483px" width="15" height="15" viewBox="0 0 15 15"><polygon points="7.50,0.20 9.24,2.71 12.19,1.91 11.92,4.95 14.69,6.23 12.52,8.39 13.82,11.15 10.78,11.41 10.00,14.36 7.50,12.60 5.00,14.36 4.22,11.41 1.18,11.15 2.48,8.39 0.31,6.23 3.08,4.95 2.81,1.91 5.76,2.71" fill="#4a4c66"/><circle cx="7.5" cy="7.5" r="3.3" fill="#f6f6fa"/></svg>
<svg style="left:52.5px;top:516px" width="11" height="13.5" viewBox="0 0 11 13.5"><path d="M0.6 3.6 L3.6 0.6 H10 V12.9 H0.6 Z" fill="#eafcff" stroke="#6d6f98" stroke-width="1"/><path d="M3.6 0.6 V12.9 M6.8 0.6 V12.9 M0.6 6 H10 M0.6 9.4 H10 M0.6 3.6 H10" stroke="#7fd6e6" stroke-width="0.9"/><path d="M0.6 3.6 L3.6 0.6 H10 V12.9 H0.6 Z" fill="none" stroke="#6d6f98" stroke-width="1"/></svg>
<svg style="left:51.5px;top:540px" width="15" height="15" viewBox="0 0 15 15"><path d="M6.17 7.19 L6.18 7.00 L6.21 6.80 L6.28 6.60 L6.38 6.41 L6.52 6.23 L6.70 6.06 L6.90 5.92 L7.14 5.81 L7.39 5.73 L7.67 5.69 L7.96 5.69 L8.26 5.73 L8.56 5.82 L8.85 5.97 L9.12 6.15 L9.37 6.39 L9.59 6.66 L9.77 6.97 L9.91 7.32 L10.00 7.69 L10.03 8.09 L10.01 8.49 L9.92 8.90 L9.78 9.29 L9.57 9.68 L9.30 10.03 L8.98 10.36 L8.60 10.63 L8.18 10.86 L7.72 11.02 L7.23 11.12 L6.72 11.15 L6.21 11.11 L5.69 10.99 L5.19 10.79 L4.71 10.52 L4.27 10.17 L3.87 9.76 L3.53 9.28 L3.26 8.76 L3.07 8.19 L2.95 7.58 L2.92 6.96 L2.98 6.33 L3.14 5.70 L3.38 5.09 L3.72 4.52 L4.14 3.99 L4.64 3.52 L5.21 3.11 L5.84 2.79 L6.52 2.56 L7.24 2.43 L7.98 2.39 L8.72 2.47 L9.46 2.65 L10.18 2.94 L10.85 3.34 L11.47 3.83 L12.03 4.41 L12.49 5.08 L12.87 5.81 L13.14 6.60 L13.30 7.43 L13.34 8.29 L13.25 9.15 L13.04 10.00 L12.71 10.83 L12.26 11.60 L11.70 12.32 L11.03 12.95 L10.28 13.49 L9.44 13.92 L8.54 14.23 L7.60 14.42 L6.63 14.47 L5.65 14.38 L4.68 14.15 L3.75 13.78 L2.87 13.27" fill="none" stroke="#8486aa" stroke-width="1.15"/></svg>
<svg style="left:51.5px;top:572px" width="15" height="15" viewBox="0 0 15 15"><circle cx="8" cy="4.8" r="4.2" fill="#f7f7fb" stroke="#6d6f98" stroke-width="1"/><path d="M0.8 11.6 L4.6 5 L8.4 11.6 Z" fill="#f7f7fb" stroke="#6d6f98" stroke-width="1"/><rect x="5.6" y="7.6" width="8.6" height="6.8" fill="#f7f7fb" stroke="#6d6f98" stroke-width="1"/></svg>
<svg style="left:51px;top:598px" width="16" height="15" viewBox="0 0 16 15"><path d="M0.6 4.4 L3 2.2 V3.4 H11.6 V1 L15.4 4.4 L11.6 7.6 V5.6 H3 V6.6 Z" fill="#f7f7fb" stroke="#6d6f98" stroke-width="1"/><path d="M0.6 8.6 H4.4 V7.2 L8 10.6 L4.4 14 V12.6 H0.6 L2.6 10.6 Z M15.4 10.6 L11.8 7.4 V8.8 H9 L10.8 10.6 L9 12.4 H11.8 V13.8 Z" fill="#f7f7fb" stroke="#6d6f98" stroke-width="1"/></svg>
<svg style="left:51.5px;top:623px" width="15" height="16" viewBox="0 0 15 16"><path d="M4 0.8 L7 4 L4 7.2 L1 4 Z" fill="#f7f7fb" stroke="#6d6f98" stroke-width="1"/><circle cx="4" cy="12" r="2.8" fill="#f7f7fb" stroke="#6d6f98" stroke-width="1"/><rect x="9.4" y="5.4" width="4.8" height="4.2" fill="#f7f7fb" stroke="#6d6f98" stroke-width="1"/><path d="M4 7.2 V9.2 M6.8 12 H11.8 V9.6" fill="none" stroke="#6d6f98" stroke-width="1"/></svg>
<svg style="left:51px;top:648px" width="17" height="16" viewBox="0 0 17 16"><path d="M4.6 0.8 H12.6 V5.6 H4.6 Z" fill="#f7f7fb" stroke="#6d6f98" stroke-width="1"/><path d="M2.4 3.4 H4.6 V7.2 H2.4 Z M12.6 3.4 H14.8 V7.2 H12.6 Z" fill="#f7f7fb" stroke="#6d6f98" stroke-width="0.9"/><path d="M0.8 9.4 C5 8 9 10.6 16 9 V14 C10 15.4 6 12.8 0.8 14.6 Z" fill="#f7f7fb" stroke="#6d6f98" stroke-width="1"/></svg>
<svg style="left:53px;top:674.5px" width="12.5" height="13.5" viewBox="0 0 12.5 13.5"><path d="M0.7 0.7 H11.7 V7.4 H9.4 L9 12.4 L5.4 7.4 H0.7 Z" fill="#fdfdff" stroke="#4a4c78" stroke-width="1.3"/></svg>
<svg style="left:35px;top:468px" width="140" height="6" viewBox="0 0 140 6"><path d="M1 3.4 C40 2.4 90 3.8 137.5 3" fill="none" stroke="#ee1c25" stroke-width="2.6" stroke-linecap="round"/></svg>
<svg style="left:900px;top:778px" width="7" height="10" viewBox="0 0 7 10"><path d="M1 0.8 L5.6 5 L1 9.2" fill="none" stroke="#bdbdbd" stroke-width="1.4"/></svg>
<svg style="left:913px;top:778.3px" width="12" height="9.5" viewBox="0 0 12 9.5"><path d="M0.7 0.5 L5 4.75 L0.7 9 M6.7 0.5 L11 4.75 L6.7 9" fill="none" stroke="#bdbdbd" stroke-width="1.6"/></svg>
<div class="t" style="left:767.5px;top:751px;font-size:40.5px;color:rgba(255,255,255,0.82);font-weight:700;letter-spacing:-1.6px;text-shadow:0 0 1.5px rgba(90,90,90,0.55),0 0 3px rgba(120,120,120,0.35)">Bai</div>
<div class="t" style="left:882.5px;top:755px;font-size:32px;color:rgba(255,255,255,0.82);font-weight:700;letter-spacing:-2px;text-shadow:0 0 1.5px rgba(90,90,90,0.55),0 0 3px rgba(120,120,120,0.35)">经验</div>
<div class="t" style="left:769.5px;top:791px;font-size:20.5px;color:rgba(255,255,255,0.80);letter-spacing:0.28px;text-shadow:0 0 1.5px rgba(90,90,90,0.55),0 0 3px rgba(120,120,120,0.35)">jingyan.baidu.com</div>
<svg style="left:826px;top:728px" width="60" height="64" viewBox="0 0 60 64"><g fill="rgba(255,255,255,0.78)" stroke="rgba(120,120,120,0.38)" stroke-width="1.2"><ellipse cx="22" cy="11.5" rx="6.4" ry="9"/><ellipse cx="37" cy="11.5" rx="6.4" ry="9"/><ellipse cx="10.5" cy="23.5" rx="6" ry="8.4" transform="rotate(-24 10.5 24)"/><ellipse cx="48.5" cy="23" rx="6" ry="8.4" transform="rotate(24 48.5 23)"/><path d="M26 30 C14 31 3 41 5 52 C7 61 18 60.5 28 59.5 C38 60.5 50 61 52.5 52 C54.5 41 42 31 30 30 Z"/></g></svg>
<div class="t" style="left:839.5px;top:759.5px;font-size:25px;color:rgba(255,255,255,0.7);font-weight:700;letter-spacing:-0.5px;text-shadow:0 0 1.5px rgba(90,90,90,0.6)">du</div>
</body></html>
